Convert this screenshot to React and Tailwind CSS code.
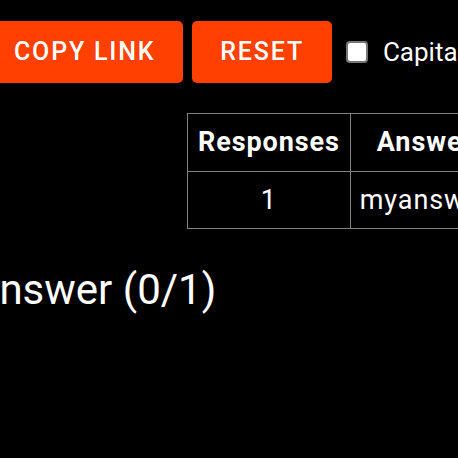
export default function App() {
  return (
    <div className="w-[458px] h-[458px] overflow-hidden bg-black text-white font-['Roboto',sans-serif]">
      <div className="ml-[-14px] w-[700px] pt-[21px]">
        {/* buttons */}
        <div className="flex items-center">
          <button className="h-[62px] px-[28px] rounded-[5px] bg-[#ff4000] text-white text-[25px] font-medium tracking-[1.8px] uppercase">
            Copy Link
          </button>
          <button className="ml-[9px] h-[62px] px-[28px] rounded-[5px] bg-[#ff4000] text-white text-[25px] font-medium tracking-[1.8px] uppercase">
            Reset
          </button>
          <label className="ml-[14px] flex items-center gap-[15px] text-[26px]">
            <span className="w-[22px] h-[22px] rounded-[4px] bg-white border-2 border-[#767676]"></span>
            Capitalization matters
          </label>
        </div>

        {/* table */}
        <table className="mt-[30px] ml-[201px] border-collapse text-[27px] tracking-[0.9px]">
          <thead>
            <tr className="h-[58px]">
              <th className="border border-[#808080] px-[10px] font-bold">Responses</th>
              <th className="border border-[#808080] px-[26px] font-bold">Answers</th>
            </tr>
          </thead>
          <tbody>
            <tr className="h-[57px]">
              <td className="border border-[#808080] px-[10px] text-center">1</td>
              <td className="border border-[#808080] px-[9px]">myanswer</td>
            </tr>
          </tbody>
        </table>

        {/* answer heading */}
        <h2 className="mt-[36px] ml-[-14px] text-[42px] leading-[50px]">Answer (0/1)</h2>
      </div>
    </div>
  );
}
